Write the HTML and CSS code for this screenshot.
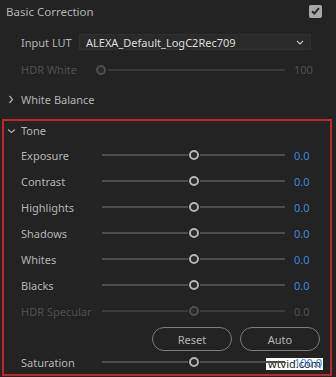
FILE: index.html
```html
<!DOCTYPE html>
<html lang="en">
<head>
    <meta charset="UTF-8">
    <title>Basic Correction</title>
    <link rel="stylesheet" href="styles.css">
</head>
<body>
    <div class="panel">
        <div class="head">
            <span>Basic Correction</span>
            <span class="check">
                <svg width="9" height="8" viewBox="0 0 9 8"><path d="M1 4.2 L3.4 6.5 L8 1.2" fill="none" stroke="#2a2a2a" stroke-width="2"/></svg>
            </span>
        </div>

        <div class="row lut">
            <span class="label lut-label">Input LUT</span>
            <div class="select">
                <span>ALEXA_Default_LogC2Rec709</span>
                <svg width="8" height="5" viewBox="0 0 8 5"><path d="M1 1 L4 4 L7 1" fill="none" stroke="#bdbdbd" stroke-width="1.2"/></svg>
            </div>
        </div>

        <div class="row hdr dim">
            <span class="label hdr-label">HDR White</span>
            <div class="slider start">
                <span class="thumb"></span>
                <span class="track"></span>
            </div>
            <span class="value">100</span>
        </div>

        <div class="section wb">
            <svg class="chev" width="8" height="9" viewBox="0 0 8 9"><path d="M2.5 1 L5.5 4.5 L2.5 8" fill="none" stroke="#b0b0b0" stroke-width="1.2"/></svg>
            <span>White Balance</span>
        </div>

        <div class="tone">
            <div class="section tone-head">
                <svg class="chev" width="9" height="8" viewBox="0 0 9 8"><path d="M1 2.5 L4.5 5.5 L8 2.5" fill="none" stroke="#b0b0b0" stroke-width="1.2"/></svg>
                <span>Tone</span>
            </div>

            <div class="row">
                <span class="label">Exposure</span>
                <div class="slider"><span class="track"></span><span class="thumb"></span><span class="track"></span></div>
                <span class="value blue">0.0</span>
            </div>
            <div class="row">
                <span class="label">Contrast</span>
                <div class="slider"><span class="track"></span><span class="thumb"></span><span class="track"></span></div>
                <span class="value blue">0.0</span>
            </div>
            <div class="row">
                <span class="label">Highlights</span>
                <div class="slider"><span class="track"></span><span class="thumb"></span><span class="track"></span></div>
                <span class="value blue">0.0</span>
            </div>
            <div class="row">
                <span class="label">Shadows</span>
                <div class="slider"><span class="track"></span><span class="thumb"></span><span class="track"></span></div>
                <span class="value blue">0.0</span>
            </div>
            <div class="row">
                <span class="label">Whites</span>
                <div class="slider"><span class="track"></span><span class="thumb"></span><span class="track"></span></div>
                <span class="value blue">0.0</span>
            </div>
            <div class="row">
                <span class="label">Blacks</span>
                <div class="slider"><span class="track"></span><span class="thumb"></span><span class="track"></span></div>
                <span class="value blue">0.0</span>
            </div>
            <div class="row dim">
                <span class="label">HDR Specular</span>
                <div class="slider"><span class="track"></span><span class="thumb"></span><span class="track"></span></div>
                <span class="value">0.0</span>
            </div>

            <div class="buttons">
                <button>Reset</button>
                <button>Auto</button>
            </div>

            <div class="row sat">
                <span class="label">Saturation</span>
                <div class="slider"><span class="track"></span><span class="thumb"></span><span class="track"></span></div>
                <span class="value blue">100.0</span>
                <span class="mark">wtvid.com</span>
            </div>
        </div>
    </div>
</body>
</html>
```

FILE: styles.css
```css
body {
    margin: 0;
    background: #232323;
    font-family: 'Noto Sans', sans-serif;
    font-size: 11px;
    color: #b4b4b4;
    width: 336px;
    height: 377px;
    overflow: hidden;
}

.head {
    height: 22px;
    display: flex;
    align-items: center;
    justify-content: space-between;
    padding: 0 14px 0 6px;
    font-size: 11.5px;
}

.check {
    width: 13px;
    height: 13px;
    border-radius: 2px;
    background: #a9a9a9;
    display: flex;
    align-items: center;
    justify-content: center;
}

.row {
    display: flex;
    align-items: center;
    height: 26px;
    padding-left: 21px;
    position: relative;
}

.tone .row {
    padding-left: 17px;
}

.label {
    width: 81px;
    flex-shrink: 0;
    white-space: nowrap;
}

.lut {
    margin-top: 7px;
}

.lut-label {
    width: 58px;
}

.select {
    width: 232px;
    height: 16px;
    box-sizing: border-box;
    background: #2a2a2a;
    border: 1px solid #303030;
    display: flex;
    align-items: center;
    justify-content: space-between;
    padding: 0 6px 0 6px;
    color: #dcdcdc;
}

.hdr {
    height: 29px;
}

.hdr-label {
    width: 75px;
}

.slider {
    width: 183px;
    height: 10px;
    display: flex;
    align-items: center;
    gap: 1px;
}

.slider.start {
    width: 189px;
    gap: 2px;
}

.track {
    flex: 1;
    height: 2px;
    background: #4d4d4d;
}

.thumb {
    width: 10px;
    height: 10px;
    box-sizing: border-box;
    border: 2px solid #b3b3b3;
    border-radius: 50%;
    background: #2a2a2a;
}

.value {
    margin-left: 9px;
}

.blue {
    color: #3e86d6;
}

.dim {
    color: #4f4f4f;
}

.dim .thumb {
    border-color: #4f4f4f;
}

.dim .track {
    background: #3a3a3a;
}

.section {
    display: flex;
    align-items: center;
    height: 30px;
}

.section span {
    margin-left: 6px;
}

.wb {
    padding-left: 7px;
}

.tone {
    margin: 5px 0 0 2px;
    width: 330px;
    height: 257px;
    box-sizing: border-box;
    border: 2px solid #c0262c;
}

.tone-head {
    height: 19px;
    padding-left: 3px;
}

.tone-head span {
    margin-left: 5px;
}

.tone-head + .row {
    margin-top: 2px;
}

.buttons {
    display: flex;
    justify-content: flex-end;
    gap: 8px;
    padding-right: 10px;
    margin-top: 3px;
}

button {
    width: 80px;
    height: 24px;
    border: 1px solid #7c7c7c;
    border-radius: 12px;
    background: transparent;
    color: #b4b4b4;
    font-family: 'Noto Sans', sans-serif;
    font-size: 11px;
    padding: 0;
}

.sat {
    height: 22px;
}

.mark {
    position: absolute;
    left: 262px;
    top: 7px;
    padding: 0 2px;
    background: #fff;
    color: #1a1a1a;
    font-size: 11px;
    line-height: 12px;
    z-index: -1;
}
```
